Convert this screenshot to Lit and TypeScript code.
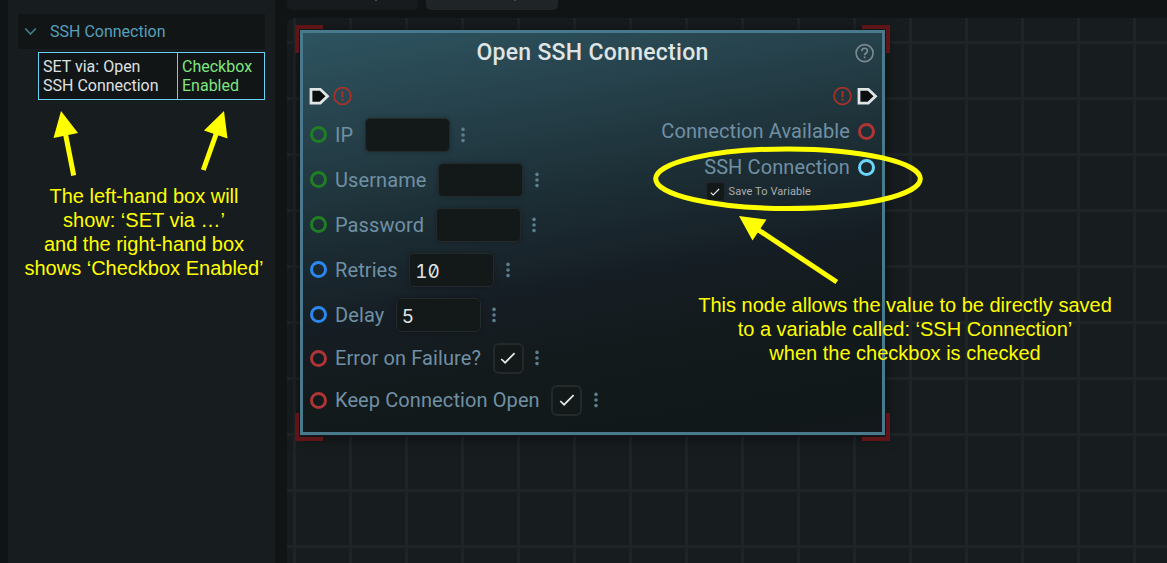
import { LitElement, html, css, svg, nothing } from "lit";
import { customElement, property } from "lit/decorators.js";

interface Pin {
  label: string;
  tone: string;
  kind: "text" | "check";
  value?: string;
}

const INPUTS: Pin[] = [
  { label: "IP", tone: "green", kind: "text", value: "" },
  { label: "Username", tone: "green", kind: "text", value: "" },
  { label: "Password", tone: "green", kind: "text", value: "" },
  { label: "Retries", tone: "blue", kind: "text", value: "10" },
  { label: "Delay", tone: "blue", kind: "text", value: "5" },
  { label: "Error on Failure?", tone: "red", kind: "check" },
  { label: "Keep Connection Open", tone: "red", kind: "check" },
];

const tick = (size: number, width: number) => html`<svg width=${size} height=${size} viewBox="0 0 16 16" fill="none">
  ${svg`<path d="M1.2 9 L5.1 12.7 L14.6 3.2" stroke="#e6e9ea" stroke-width=${width}/>`}
</svg>`;

const execPin = html`<svg width="21" height="18" viewBox="0 0 21 18">
  <path d="M2 2.3 H11.3 L18.5 9.3 L11.3 16.1 H2 Z" fill="#0b0e0f" stroke="#dfe4e5" stroke-width="2.8" />
</svg>`;

const alertIcon = html`<svg width="19" height="19" viewBox="0 0 19 19" fill="none" stroke="#a93129">
  <circle cx="9.5" cy="9" r="8.4" stroke-width="1.7" />
  <path d="M9.5 4.3 V10.2 M9.5 11.8 V13.7" stroke-width="1.9" />
</svg>`;

const dots = html`<svg width="4" height="16" viewBox="0 0 4 16" fill="#5b7f8f">
  <circle cx="2" cy="2.4" r="1.8" /><circle cx="2" cy="8" r="1.8" /><circle cx="2" cy="13.6" r="1.8" />
</svg>`;

@customElement("pin-ring")
class PinRing extends LitElement {
  @property({ reflect: true }) tone = "green";
  static styles = css`
    :host {
      display: block;
      flex: none;
      box-sizing: border-box;
      width: 17px;
      height: 17px;
      border: 3px solid #1f7f22;
      border-radius: 50%;
    }
    :host([tone="blue"]) { border-color: #2a88ee; }
    :host([tone="red"]) { border-color: #ad3535; }
    :host([tone="cyan"]) { border-color: #6bd6fb; }
  `;
  render() {
    return nothing;
  }
}

@customElement("variable-panel")
class VariablePanel extends LitElement {
  static styles = css`
    :host {
      display: block;
      box-sizing: border-box;
      width: 267px;
      padding: 14px 10px 0;
      background: #171c1e;
      font-family: Roboto, sans-serif;
      font-size: 16px;
    }
    .head {
      display: flex;
      align-items: center;
      gap: 13px;
      height: 35px;
      padding-left: 6px;
      background: #121516;
      color: #57a0bb;
    }
    .usage {
      display: grid;
      grid-template-columns: 138px 1fr;
      box-sizing: border-box;
      height: 48px;
      margin: 3px 0 0 20px;
      border: 1px solid #6bd0f5;
      background: #121516;
      color: #dfe1e2;
      line-height: 19px;
      white-space: nowrap;
    }
    .cell { padding: 4px 0 0 4px; }
    .state { border-left: 1px solid #6bd0f5; color: #7fe57f; }
  `;
  render() {
    return html`
      <div class="head">
        <svg width="13" height="9" viewBox="0 0 13 9" fill="none">
          <path d="M1.2 1.5 L6.5 7 L11.8 1.5" stroke="#427b8c" stroke-width="1.8" />
        </svg>
        <span>SSH Connection</span>
      </div>
      <div class="usage">
        <div class="cell">SET via: Open<br />SSH Connection</div>
        <div class="cell state">Checkbox<br />Enabled</div>
      </div>
    `;
  }
}

@customElement("flow-node")
class FlowNode extends LitElement {
  static styles = css`
    :host {
      display: block;
      box-sizing: border-box;
      width: 585px;
      height: 405px;
      border: 3px solid #487a8b;
      background: linear-gradient(170deg, #2d5460 0%, #27444e 18%, #1d2f36 40%, #161e25 59%, #131a1c 74%, #111819 94%, #14181d 100%);
      box-shadow: 0 2px 14px rgba(0, 0, 0, 0.55);
      color: #7090a4;
      font-family: Roboto, sans-serif;
      font-size: 20px;
      letter-spacing: 0.1px;
      white-space: nowrap;
    }
    svg { display: block; flex: none; }
    .title {
      display: grid;
      grid-template-columns: 20px 1fr 20px;
      align-items: center;
      height: 39px;
      padding: 0 7px;
      color: #dfe4e5;
      font-size: 23px;
      font-weight: 500;
      letter-spacing: 0.28px;
      text-align: center;
    }
    .exec {
      display: flex;
      justify-content: space-between;
      padding: 15px 4px 0 6px;
    }
    .pair { display: flex; align-items: center; gap: 3px; height: 18px; }
    .pair.out { gap: 5px; }
    .pins { display: flex; justify-content: space-between; padding: 7px 7px 0; }
    .row { display: flex; align-items: center; height: 45px; }
    .row.short { height: 42px; }
    .row pin-ring { margin-right: 8px; }
    .field {
      box-sizing: border-box;
      width: 85px;
      height: 34px;
      margin: 0 11.5px;
      padding-left: 5px;
      border: 1px solid #24292b;
      border-radius: 5px;
      background: #131819;
      box-shadow: 0 0 5px rgba(0, 0, 0, 0.25);
      color: #dfe1e2;
      font: 19px/35px Inter, sans-serif;
      font-feature-settings: "zero", "tnum";
      letter-spacing: 0;
    }
    .box {
      display: grid;
      place-items: center;
      box-sizing: border-box;
      width: 31px;
      height: 31px;
      margin: 0 11.5px;
      border: 2px solid #24292b;
      border-radius: 6px;
      background: #131819;
    }
    .outputs { display: flex; flex-direction: column; align-items: flex-end; padding-top: 1px; }
    .outputs .row { height: 36px; }
    .outputs pin-ring { margin: 0 0 0 8px; }
    .save {
      display: flex;
      align-items: center;
      gap: 3px;
      margin: -4px 64px 0 0;
      color: #a9afb1;
      font-size: 11px;
      letter-spacing: 0.1px;
    }
    .mini {
      display: grid;
      place-items: center;
      width: 17px;
      height: 17px;
      border: 2px solid #20272a;
      border-radius: 5px;
      background: #131819;
    }
  `;
  render() {
    return html`
      <div class="title">
        <span></span>
        <span>Open SSH Connection</span>
        <svg width="20" height="20" viewBox="0 0 20 20" fill="none" stroke="#7b8b91">
          <circle cx="9.6" cy="10.1" r="8.5" stroke-width="1.6" />
          <path d="M6.8 8.2 C6.8 4.3 12.4 4.4 12.4 7.9 C12.4 9.9 9.6 10.1 9.6 12.3 M9.6 13.5 V15.3" stroke-width="1.7" />
        </svg>
      </div>
      <div class="exec">
        <div class="pair">${execPin}${alertIcon}</div>
        <div class="pair out">${alertIcon}${execPin}</div>
      </div>
      <div class="pins">
        <div>
          ${INPUTS.map(
            (p) => html`<div class="row ${p.kind === "check" ? "short" : ""}">
              <pin-ring tone=${p.tone}></pin-ring>
              <span>${p.label}</span>
              ${p.kind === "check"
                ? html`<div class="box">${tick(16, 1.7)}</div>`
                : html`<div class="field">${p.value}</div>`}
              ${dots}
            </div>`
          )}
        </div>
        <div class="outputs">
          <div class="row"><span>Connection Available</span><pin-ring tone="red"></pin-ring></div>
          <div class="row"><span>SSH Connection</span><pin-ring tone="cyan"></pin-ring></div>
          <div class="save"><span class="mini">${tick(10, 1.8)}</span><span>Save To Variable</span></div>
        </div>
      </div>
    `;
  }
}

@customElement("app-root")
class AppRoot extends LitElement {
  static styles = css`
    :host {
      display: flex;
      position: relative;
      box-sizing: border-box;
      width: 1167px;
      height: 563px;
      padding-left: 8px;
      gap: 12px;
      overflow: hidden;
      background: #111415;
    }
    .main { display: flex; flex-direction: column; flex: 1; gap: 8px; min-width: 0; }
    .tabs { display: flex; gap: 8px; height: 10px; }
    .tab {
      width: 131px;
      border-radius: 0 0 5px 5px;
      background: #171b1d;
    }
    .tab::before {
      content: "";
      display: block;
      width: 2px;
      height: 1px;
      margin-left: 88px;
      background: #4a5052;
    }
    .tab.active { width: 132px; background: #1f2427; }
    .canvas {
      position: relative;
      flex: 1;
      overflow: hidden;
      border-radius: 8px 0 0 0;
      background-color: #171c1e;
      background-image: linear-gradient(90deg, #1f2427 3px, transparent 3px), linear-gradient(#1f2427 3px, transparent 3px);
      background-size: 56px 56px;
      background-position: 6px 23px;
    }
    flow-node { position: absolute; left: 13px; top: 12px; }
    .corner {
      position: absolute;
      box-sizing: border-box;
      width: 28px;
      height: 28px;
      border: 0 solid #5f1518;
      z-index: 1;
    }
    .tl { left: 8px; top: 7px; border-width: 4px 0 0 4px; }
    .tr { left: 575px; top: 7px; border-width: 4px 4px 0 0; }
    .bl { left: 8px; top: 395px; border-width: 0 0 4px 4px; }
    .br { left: 575px; top: 395px; border-width: 0 4px 4px 0; }
    .marks { position: absolute; inset: 0; z-index: 2; }
    .note {
      position: absolute;
      z-index: 3;
      color: #ffff00;
      font: 20px/24px "Liberation Sans", Arial, sans-serif;
      text-align: center;
      white-space: nowrap;
    }
    .note.left { left: 8px; top: 184px; width: 272px; }
    .note.right { left: 680px; top: 293px; width: 450px; }
  `;
  render() {
    return html`
      <variable-panel></variable-panel>
      <div class="main">
        <div class="tabs"><div class="tab"></div><div class="tab active"></div></div>
        <div class="canvas">
          <flow-node></flow-node>
          <div class="corner tl"></div>
          <div class="corner tr"></div>
          <div class="corner bl"></div>
          <div class="corner br"></div>
        </div>
      </div>
      <svg class="marks" width="1167" height="563" viewBox="0 0 1167 563" fill="none" stroke="#ffff00" stroke-width="5">
        <path d="M65.5 134 L73.7 175.6 M216.5 133 L203.3 170 M757 229 L836.8 282" />
        <path d="M61 111 L78 133 L53.5 138 Z M224 111 L227.5 138.5 L204 130.5 Z M739 216 L766.5 219.5 L752.5 240.5 Z" fill="#ffff00" stroke="none" />
        <ellipse cx="788" cy="178.7" rx="132.3" ry="29.8" />
      </svg>
      <div class="note left">
        The left-hand box will<br />show: ‘SET via …’<br />and the right-hand box<br />shows ‘Checkbox Enabled’
      </div>
      <div class="note right">
        This node allows the value to be directly saved<br />to a variable called: ‘SSH Connection’<br />when the checkbox is checked
      </div>
    `;
  }
}
